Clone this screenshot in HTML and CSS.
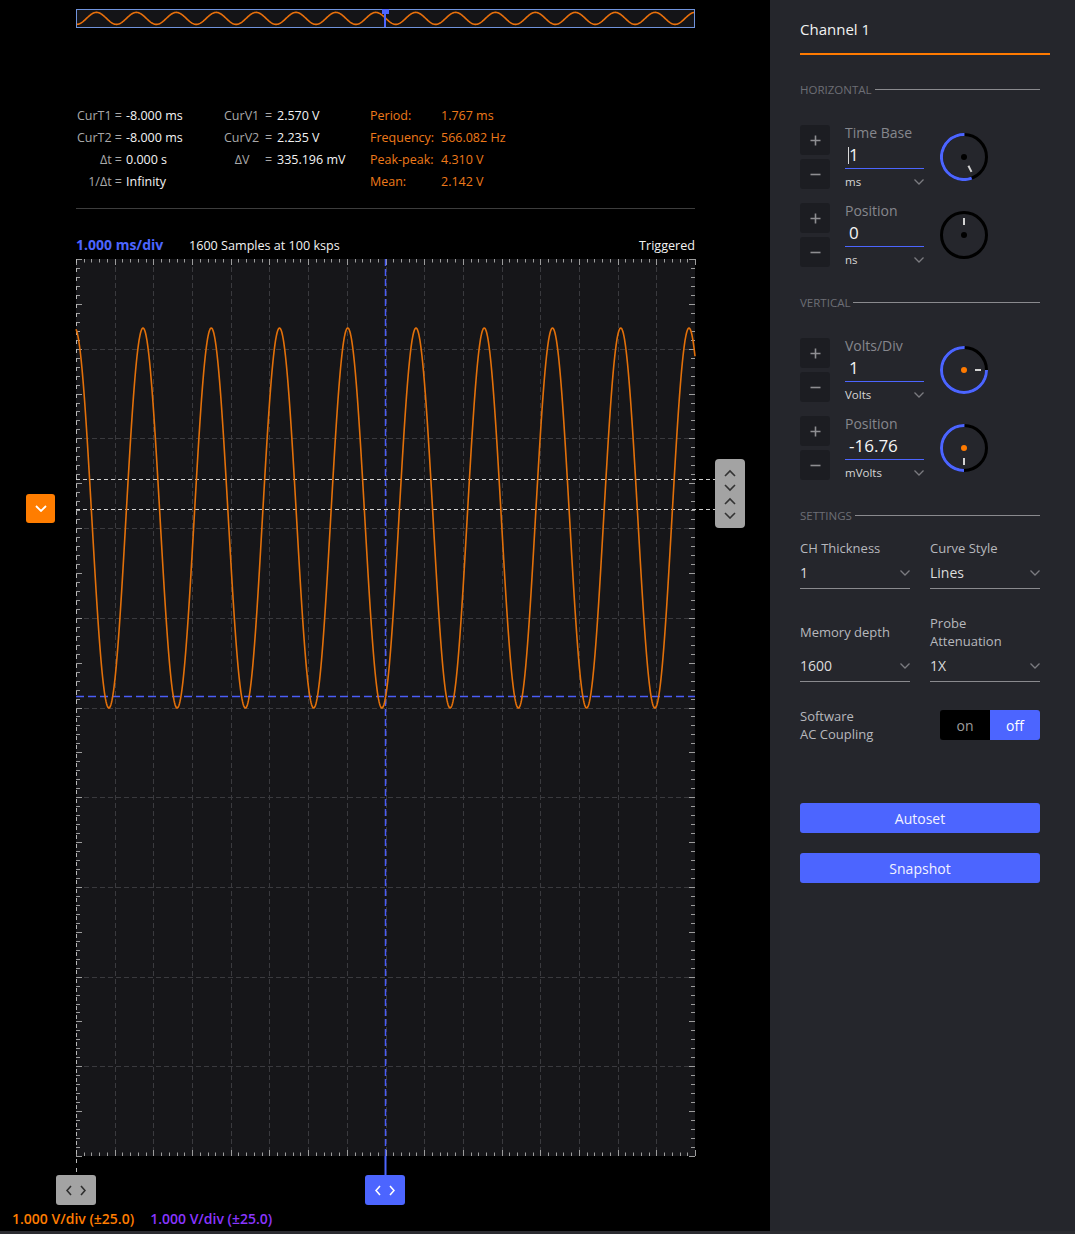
FILE: index.html
```html
<!DOCTYPE html>
<html lang="en">
<head>
<meta charset="utf-8">
<title>Oscilloscope</title>
<link rel="stylesheet" href="styles.css">
</head>
<body>
<div class="app">
  <main class="scope">
    <div class="overview">
      <svg class="ov-svg" width="617" height="17" viewBox="0 0 617 17">
        <path id="ovtrace" class="ov-trace" d=""/>
      </svg>
      <span class="ov-marker"></span>
    </div>

    <div class="meas">
      <div class="mcol mcol-t">
        <span class="ml">CurT1 =</span><span class="mv">-8.000 ms</span>
        <span class="ml">CurT2 =</span><span class="mv">-8.000 ms</span>
        <span class="ml">Δt =</span><span class="mv">0.000 s</span>
        <span class="ml">1/Δt =</span><span class="mv">Infinity</span>
      </div>
      <div class="mcol mcol-v">
        <span class="ml">CurV1</span><span class="meq">=</span><span class="mv">2.570 V</span>
        <span class="ml">CurV2</span><span class="meq">=</span><span class="mv">2.235 V</span>
        <span class="ml ml-c">ΔV</span><span class="meq">=</span><span class="mv">335.196 mV</span>
      </div>
      <div class="mcol mcol-s">
        <span>Period:</span><span>1.767 ms</span>
        <span>Frequency:</span><span>566.082 Hz</span>
        <span>Peak-peak:</span><span>4.310 V</span>
        <span>Mean:</span><span>2.142 V</span>
      </div>
    </div>

    <div class="sep"></div>

    <div class="plot-head">
      <span class="tdiv">1.000 ms/div</span>
      <span class="samples">1600 Samples at 100 ksps</span>
      <span class="trig">Triggered</span>
    </div>

    <div class="plot-wrap">
      <svg class="plot" width="619" height="897" viewBox="0 0 619 897">
        <rect class="plot-bg" x="0" y="0" width="619" height="897"/>
        <g id="grid" class="grid"></g>
        <g id="ticks" class="ticks"></g>
        <line class="cur-t1" x1="0.5" y1="0" x2="0.5" y2="917"/>
        <line class="trig-v" x1="309.5" y1="0" x2="309.5" y2="897"/>
        <line class="trig-v-ext" x1="309.5" y1="897" x2="309.5" y2="917"/>
        <line class="trig-h" x1="0" y1="437.5" x2="619" y2="437.5"/>
        <line class="cur-v" x1="0" y1="220.5" x2="639" y2="220.5"/>
        <line class="cur-v" x1="0" y1="250.5" x2="639" y2="250.5"/>
        <path id="trace" class="trace" d=""/>
      </svg>
      <button class="lvl-btn" aria-label="channel offset">
        <svg width="12" height="7" viewBox="0 0 12 7"><polyline points="1,1 6,6 11,1"/></svg>
      </button>
      <div class="vcur-handle">
        <svg width="12" height="50" viewBox="0 0 12 50">
          <polyline points="1,7 6,2 11,7"/>
          <polyline points="1,16 6,21 11,16"/>
          <polyline points="1,35 6,30 11,35"/>
          <polyline points="1,44 6,49 11,44"/>
        </svg>
      </div>
    </div>

    <div class="handles">
      <div class="th th-gray">
        <svg width="20" height="11" viewBox="0 0 20 11"><polyline points="5,1 1,5.5 5,10"/><polyline points="15,1 19,5.5 15,10"/></svg>
      </div>
      <div class="th th-blue">
        <svg width="20" height="11" viewBox="0 0 20 11"><polyline points="5,1 1,5.5 5,10"/><polyline points="15,1 19,5.5 15,10"/></svg>
      </div>
    </div>

    <div class="scales">
      <span class="sc-ch1">1.000 V/div (±25.0)</span>
      <span class="sc-ch2">1.000 V/div (±25.0)</span>
    </div>
  </main>

  <aside class="panel">
    <div class="ch-title">Channel 1</div>

    <section class="sec">
      <div class="sec-head"><span>HORIZONTAL</span><i></i></div>

      <div class="ctl">
        <div class="pm">
          <button class="pmb"><svg width="11" height="11" viewBox="0 0 11 11"><path d="M5.5 0.5V10.5M0.5 5.5H10.5"/></svg></button>
          <button class="pmb"><svg width="11" height="11" viewBox="0 0 11 11"><path d="M0.5 5.5H10.5"/></svg></button>
        </div>
        <div class="field">
          <div class="f-label">Time Base</div>
          <div class="f-input"><span class="caret"></span>1</div>
          <div class="f-unit"><span>ms</span><svg class="chev" width="10" height="6" viewBox="0 0 10 6"><polyline points="0.5,0.5 5,5 9.5,0.5"/></svg></div>
        </div>
        <svg class="knob" width="48" height="48" viewBox="0 0 48 48">
          <circle class="k-ring" cx="24" cy="24" r="22.5"/>
          <circle class="k-arc" cx="24" cy="24" r="22.5" stroke-dasharray="78.5 200" transform="rotate(70 24 24)"/>
          <line class="k-tick" x1="28.4" y1="32.8" x2="31.5" y2="38.9"/>
          <circle class="k-dot" cx="24" cy="24" r="3"/>
        </svg>
      </div>

      <div class="ctl">
        <div class="pm">
          <button class="pmb"><svg width="11" height="11" viewBox="0 0 11 11"><path d="M5.5 0.5V10.5M0.5 5.5H10.5"/></svg></button>
          <button class="pmb"><svg width="11" height="11" viewBox="0 0 11 11"><path d="M0.5 5.5H10.5"/></svg></button>
        </div>
        <div class="field">
          <div class="f-label">Position</div>
          <div class="f-input">0</div>
          <div class="f-unit"><span>ns</span><svg class="chev" width="10" height="6" viewBox="0 0 10 6"><polyline points="0.5,0.5 5,5 9.5,0.5"/></svg></div>
        </div>
        <svg class="knob" width="48" height="48" viewBox="0 0 48 48">
          <circle class="k-ring" cx="24" cy="24" r="22.5"/>
          <line class="k-tick" x1="24" y1="7" x2="24" y2="14"/>
          <circle class="k-dot" cx="24" cy="24" r="3"/>
        </svg>
      </div>
    </section>

    <section class="sec">
      <div class="sec-head"><span>VERTICAL</span><i></i></div>

      <div class="ctl">
        <div class="pm">
          <button class="pmb"><svg width="11" height="11" viewBox="0 0 11 11"><path d="M5.5 0.5V10.5M0.5 5.5H10.5"/></svg></button>
          <button class="pmb"><svg width="11" height="11" viewBox="0 0 11 11"><path d="M0.5 5.5H10.5"/></svg></button>
        </div>
        <div class="field">
          <div class="f-label">Volts/Div</div>
          <div class="f-input">1</div>
          <div class="f-unit"><span>Volts</span><svg class="chev" width="10" height="6" viewBox="0 0 10 6"><polyline points="0.5,0.5 5,5 9.5,0.5"/></svg></div>
        </div>
        <svg class="knob" width="48" height="48" viewBox="0 0 48 48">
          <circle class="k-ring" cx="24" cy="24" r="22.5"/>
          <circle class="k-arc" cx="24" cy="24" r="22.5" stroke-dasharray="106 200"/>
          <line class="k-tick" x1="35" y1="24" x2="41" y2="24"/>
          <circle class="k-dot k-dot-or" cx="24" cy="24" r="3"/>
        </svg>
      </div>

      <div class="ctl">
        <div class="pm">
          <button class="pmb"><svg width="11" height="11" viewBox="0 0 11 11"><path d="M5.5 0.5V10.5M0.5 5.5H10.5"/></svg></button>
          <button class="pmb"><svg width="11" height="11" viewBox="0 0 11 11"><path d="M0.5 5.5H10.5"/></svg></button>
        </div>
        <div class="field">
          <div class="f-label">Position</div>
          <div class="f-input">-16.76</div>
          <div class="f-unit"><span>mVolts</span><svg class="chev" width="10" height="6" viewBox="0 0 10 6"><polyline points="0.5,0.5 5,5 9.5,0.5"/></svg></div>
        </div>
        <svg class="knob" width="48" height="48" viewBox="0 0 48 48">
          <circle class="k-ring" cx="24" cy="24" r="22.5"/>
          <circle class="k-arc" cx="24" cy="24" r="22.5" stroke-dasharray="70.7 200" transform="rotate(90 24 24)"/>
          <line class="k-tick" x1="24" y1="34" x2="24" y2="41"/>
          <circle class="k-dot k-dot-or" cx="24" cy="24" r="3"/>
        </svg>
      </div>
    </section>

    <section class="sec">
      <div class="sec-head"><span>SETTINGS</span><i></i></div>
      <div class="sets">
        <div class="set">
          <div class="s-label">CH Thickness</div>
          <div class="s-sel"><span>1</span><svg class="chev" width="10" height="6" viewBox="0 0 10 6"><polyline points="0.5,0.5 5,5 9.5,0.5"/></svg></div>
        </div>
        <div class="set">
          <div class="s-label">Curve Style</div>
          <div class="s-sel"><span>Lines</span><svg class="chev" width="10" height="6" viewBox="0 0 10 6"><polyline points="0.5,0.5 5,5 9.5,0.5"/></svg></div>
        </div>
        <div class="set set-2">
          <div class="s-label">Memory depth</div>
          <div class="s-sel"><span>1600</span><svg class="chev" width="10" height="6" viewBox="0 0 10 6"><polyline points="0.5,0.5 5,5 9.5,0.5"/></svg></div>
        </div>
        <div class="set set-2">
          <div class="s-label">Probe<br>Attenuation</div>
          <div class="s-sel"><span>1X</span><svg class="chev" width="10" height="6" viewBox="0 0 10 6"><polyline points="0.5,0.5 5,5 9.5,0.5"/></svg></div>
        </div>
      </div>
      <div class="acc">
        <div class="s-label">Software<br>AC Coupling</div>
        <div class="toggle"><span class="tg-on">on</span><span class="tg-off">off</span></div>
      </div>
    </section>

    <div class="actions">
      <button class="act">Autoset</button>
      <button class="act">Snapshot</button>
    </div>
  </aside>
</div>
<script src="script.js"></script>
</body>
</html>
```

FILE: styles.css
```css
* { box-sizing: border-box; }
html, body { margin: 0; padding: 0; }
body {
  width: 1075px;
  height: 1234px;
  overflow: hidden;
  background: #2b2c31;
  font-family: "Open Sans", "Noto Sans", sans-serif;
  color: #f2f2f2;
}
button { font-family: inherit; border: 0; padding: 0; cursor: pointer; }

.app { display: flex; height: 1231px; }

/* ---------- scope ---------- */
.scope {
  width: 770px;
  flex: none;
  background: #000;
  display: flex;
  flex-direction: column;
}

.overview {
  position: relative;
  margin: 9px 0 0 76px;
  width: 619px;
  height: 19px;
  border: 1px solid #7093dc;
  background: #141417;
}
.ov-svg { display: block; }
.ov-trace { fill: none; stroke: #e8700c; stroke-width: 1.6; }
.ov-marker {
  position: absolute;
  left: 305px;
  top: -1px;
  width: 7px;
  height: 5px;
  background: #4c65ff;
}
.ov-marker::after {
  content: "";
  position: absolute;
  left: 2px;
  top: 4px;
  width: 2px;
  height: 14px;
  background: #4c65ff;
}

.meas {
  display: flex;
  margin: 77px 0 0 76px;
  font-size: 12.5px;
  line-height: 22px;
  white-space: nowrap;
}
.mcol { display: grid; align-content: start; }
.mcol-t { width: 148px; grid-template-columns: 50px auto; }
.mcol-t .ml { text-align: right; padding-right: 4px; }
.mcol-v { width: 146px; grid-template-columns: 36px 17px auto; }
.mcol-s { grid-template-columns: 71px auto; color: #ee7a1a; }
.ml { color: #a9a9a9; }
.ml-c { text-align: center; }
.meq { color: #a9a9a9; text-align: center; }
.mv { color: #f4f4f4; }

.sep {
  margin: 15px 0 0 76px;
  width: 619px;
  height: 1px;
  background: #3d3d3d;
}

.plot-head {
  display: flex;
  align-items: baseline;
  margin: 28px 0 0 76px;
  width: 619px;
  line-height: 16px;
  font-size: 12.6px;
  white-space: nowrap;
}
.tdiv { width: 113px; font-size: 14px; font-weight: 700; color: #4c65ff; }
.samples { color: #f2f2f2; }
.trig { margin-left: auto; color: #f2f2f2; }

.plot-wrap {
  position: relative;
  margin: 5px 0 0 76px;
  width: 619px;
  height: 897px;
}
.plot { display: block; overflow: visible; }
.plot-bg { fill: #161619; }
.grid line { stroke: #3a3a3e; stroke-width: 1; stroke-dasharray: 5 3; }
.ticks line { stroke: #9c9c9c; stroke-width: 1; }
.cur-t1 { stroke: #b8b8b8; stroke-width: 1; stroke-dasharray: 4 5; }
.trig-v { stroke: #4b5df6; stroke-width: 1.5; stroke-dasharray: 7 3; }
.trig-v-ext { stroke: #4c65ff; stroke-width: 2; }
.trig-h { stroke: #4b5df6; stroke-width: 1.5; stroke-dasharray: 8 4; }
.cur-v { stroke: #cfcfcf; stroke-width: 1; stroke-dasharray: 4 3; }
.trace { fill: none; stroke: #e2700a; stroke-width: 1.6; stroke-linejoin: round; }

.lvl-btn {
  position: absolute;
  left: -50px;
  top: 235px;
  width: 29px;
  height: 29px;
  border-radius: 3px;
  background: #ff7d00;
  display: flex;
  align-items: center;
  justify-content: center;
}
.lvl-btn polyline { fill: none; stroke: #fff; stroke-width: 1.8; }

.vcur-handle {
  position: absolute;
  left: 639px;
  top: 200px;
  width: 30px;
  height: 69px;
  border-radius: 4px;
  background: #a3a3a3;
  display: flex;
  align-items: center;
  justify-content: center;
}
.vcur-handle polyline { fill: none; stroke: #333; stroke-width: 1.6; }

.handles {
  position: relative;
  margin: 19px 0 0 76px;
  width: 619px;
  height: 30px;
}
.th {
  position: absolute;
  top: 0;
  width: 40px;
  height: 30px;
  border-radius: 3px;
  display: flex;
  align-items: center;
  justify-content: center;
}
.th-gray { left: -20px; background: #a3a3a3; }
.th-blue { left: 289px; background: #4c65ff; }
.th polyline { fill: none; stroke-width: 1.6; }
.th-gray polyline { stroke: #2e2e2e; }
.th-blue polyline { stroke: #fff; }

.scales {
  display: flex;
  gap: 16px;
  margin-top: 6px;
  padding-left: 12px;
  font-size: 14px;
  font-weight: 600;
  line-height: 16px;
  white-space: nowrap;
}
.sc-ch1 { color: #ff7d00; }
.sc-ch2 { color: #8a36ff; }

/* ---------- panel ---------- */
.panel {
  width: 305px;
  flex: none;
  background: #25262c;
  padding: 19px 25px 0 30px;
}
.ch-title {
  font-size: 15px;
  line-height: 20px;
  color: #f2f2f2;
  padding-bottom: 14px;
  border-bottom: 2px solid #ff7a00;
}
.sec { width: 240px; margin-top: 27px; }
.sec + .sec { margin-top: 28px; }
.sec-head {
  display: flex;
  align-items: center;
  height: 14px;
  font-size: 11.5px;
  color: #6d6e75;
}
.sec-head i { flex: 1; height: 1px; background: #8a8a8e; margin-left: 3px; }

.ctl {
  display: flex;
  align-items: center;
  margin-top: 14px;
  height: 64px;
}
.sec-head + .ctl { margin-top: 29px; }
.pm { display: flex; flex-direction: column; gap: 4px; width: 30px; }
.pmb {
  width: 30px;
  height: 30px;
  border-radius: 3px;
  background: #1c1d22;
  display: flex;
  align-items: center;
  justify-content: center;
}
.pmb path { stroke: #8e8e92; stroke-width: 1.6; fill: none; }

.field { width: 79px; margin-left: 15px; align-self: stretch; }
.f-label { font-size: 14px; line-height: 16px; color: #86878d; }
.f-input {
  position: relative;
  height: 28px;
  padding-left: 4px;
  font-size: 17px;
  line-height: 28px;
  color: #f4f4f4;
  border-bottom: 1px solid #4c65ff;
}
.caret {
  display: inline-block;
  width: 1px;
  height: 17px;
  background: #d8d8d8;
  vertical-align: -3px;
  margin-left: -1px;
}
.f-unit {
  display: flex;
  justify-content: space-between;
  align-items: center;
  margin-top: 6px;
  font-size: 11.5px;
  line-height: 14px;
  color: #d6d6d6;
}
.chev polyline { fill: none; stroke: #7b7b80; stroke-width: 1.3; }

.knob { margin-left: 16px; flex: none; }
.k-ring { fill: none; stroke: #000; stroke-width: 3; }
.k-arc { fill: none; stroke: #4c65ff; stroke-width: 3; }
.k-tick { stroke: #d4d4d4; stroke-width: 2; }
.k-dot { fill: #000; }
.k-dot-or { fill: #ff7a00; }

.sets {
  display: grid;
  grid-template-columns: 110px 110px;
  column-gap: 20px;
  row-gap: 25px;
  margin-top: 17px;
}
.set { display: flex; flex-direction: column; }
.set-2 .s-label { height: 36px; display: flex; align-items: center; }
.s-label { font-size: 13px; line-height: 18px; color: #b7b8bd; }
.s-sel {
  display: flex;
  justify-content: space-between;
  align-items: center;
  margin-top: 6px;
  height: 26px;
  padding-bottom: 5px;
  font-size: 14px;
  line-height: 20px;
  color: #dcdcdc;
  border-bottom: 1px solid #8a8a8e;
}

.acc {
  display: flex;
  justify-content: space-between;
  align-items: center;
  margin-top: 25px;
}
.toggle {
  display: flex;
  width: 100px;
  height: 30px;
  border-radius: 3px;
  overflow: hidden;
  font-size: 14px;
}
.toggle span { flex: 1; display: flex; align-items: center; justify-content: center; }
.tg-on { background: #000; color: #9c9c9c; }
.tg-off { background: #4c65ff; color: #fff; }

.actions {
  display: flex;
  flex-direction: column;
  gap: 20px;
  width: 240px;
  margin-top: 60px;
}
.act {
  height: 30px;
  border-radius: 3px;
  background: #4c65ff;
  color: #f2f2ff;
  font-size: 14px;
}
```

FILE: script.js
```js
(function () {
  var NS = 'http://www.w3.org/2000/svg';
  function el(parent, tag, attrs) {
    var e = document.createElementNS(NS, tag);
    for (var k in attrs) e.setAttribute(k, attrs[k]);
    parent.appendChild(e);
    return e;
  }
  function sine(w, period, peakX, center, amp, step) {
    var d = '';
    for (var x = 0; x <= w + 0.001; x += step) {
      var y = center - amp * Math.cos(2 * Math.PI * (x - peakX) / period);
      d += (x === 0 ? 'M' : 'L') + x.toFixed(2) + ' ' + y.toFixed(2);
    }
    return d;
  }
  var W = 619, H = 897;
  var g = document.getElementById('grid');
  for (var i = 1; i < 16; i++) {
    var x = Math.round(i * W / 16) + 0.5;
    el(g, 'line', { x1: x, y1: 0, x2: x, y2: H });
  }
  for (var j = 1; j < 10; j++) {
    var y = Math.round(j * H / 10) + 0.5;
    el(g, 'line', { x1: 0, y1: y, x2: W, y2: y });
  }
  var t = document.getElementById('ticks');
  for (i = 0; i <= 80; i++) {
    x = Math.round(i * W / 80) + 0.5;
    var len = i % 5 === 0 ? 6 : 3.5;
    el(t, 'line', { x1: x, y1: 0, x2: x, y2: len });
    el(t, 'line', { x1: x, y1: H, x2: x, y2: H - len });
  }
  for (j = 0; j <= 100; j++) {
    y = Math.round(j * H / 100) + 0.5;
    var l2 = j % 5 === 0 ? 6 : 4;
    el(t, 'line', { x1: 0, y1: y, x2: l2, y2: y });
    el(t, 'line', { x1: W, y1: y, x2: W - l2, y2: y });
  }
  document.getElementById('trace').setAttribute('d', sine(W, 68.25, 67, 259, 190, 0.5));
  document.getElementById('ovtrace').setAttribute('d', sine(617, 39.9, 19.5, 8.4, 6, 0.5));
})();
```
